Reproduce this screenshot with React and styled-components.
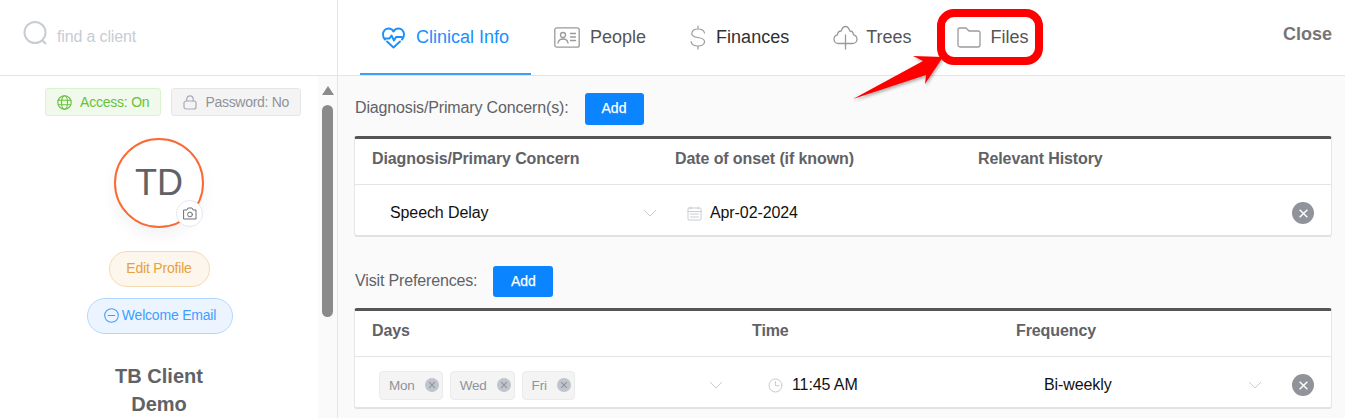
import React from "react";
import styled, { createGlobalStyle } from "styled-components";

const Global = createGlobalStyle`
  html, body { margin: 0; padding: 0; background: #fff; }
  body { font-family: "Liberation Sans", Arial, sans-serif; overflow: hidden; }
`;
const Page = styled.div`
  position: relative; width: 1345px; height: 418px; overflow: hidden;
  display: grid; grid-template-columns: 338px 1fr; background: #fff;
`;
const Side = styled.aside`
  border-right: 1px solid #e6e6e6; display: flex; flex-direction: column; height: 418px; overflow: hidden;
`;
const SearchBar = styled.div`
  height: 76px; flex: none; box-sizing: border-box; border-bottom: 1px solid #e4e4e4; display: flex; align-items: center;
  padding: 0 0 2px 23px; gap: 9px; color: #c8ccd4; font-size: 16px; letter-spacing: -0.15px;
  svg { margin-bottom: 6px; }
`;
const SideBody = styled.div`display: flex; flex: 1; min-height: 0;`;
const Profile = styled.div`
  width: 318px; flex: none; display: flex; flex-direction: column; align-items: center;
  padding-top: 12px; box-sizing: border-box;
`;
const Scroll = styled.div`
  width: 19px; flex: none; background: #fafafa; display: flex; flex-direction: column; align-items: center; padding-top: 10px; box-sizing: border-box;
`;
const ArrowUp = styled.div`
  width: 0; height: 0; border-left: 6px solid transparent; border-right: 6px solid transparent; border-bottom: 9px solid #8a8a8a;
`;
const Thumb = styled.div`width: 11px; height: 212px; margin-top: 10px; flex: none; border-radius: 6px; background: #8a8a8a;`;
const Badges = styled.div`display: flex; gap: 10px; margin-left: 28px;`;
const Badge = styled.div`
  height: 28px; box-sizing: border-box; display: flex; align-items: center; gap: 8px; border-radius: 3px; font-size: 14px; letter-spacing: ${p => p.$on ? -0.22 : -0.3}px;
  padding: 0 11px; border: 1px solid ${p => p.$on ? "#dcf3d2" : "#e6e6e8"};
  background: ${p => p.$on ? "#f0f9eb" : "#f4f4f5"}; color: ${p => p.$on ? "#67c23a" : "#909399"};
`;
const Avatar = styled.div`
  position: relative; width: 90px; height: 90px; box-sizing: border-box; margin-top: 22px; border-radius: 50%;
  border: 2px solid #fb6a33; display: flex; align-items: center; justify-content: center; background: #fff;
  font-size: 36px; color: #606266; box-shadow: 0 8px 16px rgba(0,0,0,.05);
`;
const Camera = styled.div`
  position: absolute; right: -1px; bottom: -1px; width: 27px; height: 27px; box-sizing: border-box; border-radius: 50%; background: #fff; border: 1px solid #e4e7ed;
  display: flex; align-items: center; justify-content: center;
`;
const Pill = styled.div`
  box-sizing: border-box; height: 36px; padding-bottom: 2px; display: flex; align-items: center; justify-content: center; gap: 3px; flex: none;
  font-size: 14px; letter-spacing: -0.2px; border-radius: 18px; width: ${p => p.$w}px; margin-top: ${p => p.$mt}px; margin-left: ${p => p.$ml || 0}px;
  border: 1px solid ${p => p.$c === "blue" ? "#b3d8ff" : "#f5dab1"};
  background: ${p => p.$c === "blue" ? "#ecf5ff" : "#fdf6ec"};
  color: ${p => p.$c === "blue" ? "#409eff" : "#e6a23c"};
`;
const ClientName = styled.div`
  margin-top: 28px; font-size: 20px; line-height: 28px; font-weight: 700; color: #606266; text-align: center; width: 130px; flex: none;
`;
const Main = styled.main`display: flex; flex-direction: column; min-width: 0;`;
const TopBar = styled.header`
  height: 76px; flex: none; box-sizing: border-box; border-bottom: 1px solid #e4e4e4; display: flex; padding-left: 22px; padding-right: 13px; justify-content: space-between;
`;
const Tabs = styled.nav`display: flex;`;
const Tab = styled.div`
  height: 75px; box-sizing: border-box; display: flex; align-items: center; gap: ${p => p.$gap || 10}px; padding: 2px 22px 0; font-size: 18px; margin-left: ${p => p.$ml || 0}px;
  color: ${p => p.$active ? "#1890ff" : p.$dark ? "#303133" : "#555"};
  border-bottom: 2px solid ${p => p.$active ? "#3f9cf7" : "transparent"};
`;
const Close = styled.div`font-size: 18px; font-weight: 700; color: #757575; height: 69px; display: flex; align-items: center;`;
const Content = styled.div`
  flex: 1; background: #fafafa; padding: 17px 13px 0 16px; display: flex; flex-direction: column; min-height: 0;
`;
const LabelRow = styled.div`
  display: flex; align-items: center; font-size: 16px; color: #606266; letter-spacing: -0.15px; margin-top: ${p => p.$mt || 0}px; padding-left: 1px;
  span { margin-bottom: 2px; }
`;
const Add = styled.button`
  height: ${p => p.$h}px; width: ${p => p.$w}px; margin-left: ${p => p.$ml}px; border: 0; border-radius: 3px; background: #0a84ff; color: #fff;
  font: 400 14px "Liberation Sans", Arial, sans-serif; -webkit-text-stroke: 0.25px #fff; padding: 0 0 2px;
`;
const Table = styled.section`
  margin-top: ${p => p.$mt}px; background: #fff; border: 1px solid #e6e6e6; border-top: 3px solid #555; border-bottom: 2px solid #e2e2e2; border-radius: 3px; flex: none;
`;
const HeadRow = styled.div`
  height: 45px; box-sizing: content-box; display: grid; grid-template-columns: ${p => p.$cols}; align-items: center; border-bottom: 1px solid #e4e4e4;
  font-size: 16px; font-weight: 700; color: #606266; padding-left: 17px; letter-spacing: -0.1px;
  span { margin-bottom: 6px; }
`;
const BodyRow = styled.div`
  height: 50px; box-sizing: border-box; padding-top: 6px; display: grid; grid-template-columns: ${p => p.$cols}; align-items: center; font-size: 16px; color: #111; padding-left: 17px; position: relative; letter-spacing: -0.1px;
`;
const Cell = styled.div`display: flex; align-items: center; padding-left: ${p => p.$pl || 0}px; padding-right: ${p => p.$pr || 0}px; gap: ${p => p.$gap || 0}px; justify-content: ${p => p.$between ? "space-between" : "flex-start"};`;
const Remove = styled.div`
  position: absolute; right: 17px; top: 17px; width: 22px; height: 22px; border-radius: 50%; background: #909399; display: flex; align-items: center; justify-content: center;
`;
const Tags = styled.div`display: flex; gap: 7px;`;
const Tag = styled.div`
  height: 29px; box-sizing: border-box; display: flex; align-items: center; gap: 10px; padding: 0 3px 0 9px; background: #f4f4f5; border: 1px solid #ebebed; border-radius: 4px; color: #909399; font-size: 13.5px; letter-spacing: -0.2px;
`;
const TagX = styled.span`width: 14px; height: 14px; border-radius: 50%; background: #c0c4cc; display: flex; align-items: center; justify-content: center;`;
const Overlay = styled.svg`position: absolute; left: 0; top: 0; pointer-events: none;`;

const Cross = ({ s = 10, c = "#fff", w = 1.3 }) => (
  <svg width={s} height={s} viewBox="0 0 10 10"><path d="M1.5 1.5l7 7M8.5 1.5l-7 7" stroke={c} strokeWidth={w} fill="none" /></svg>
);
const Chevron = () => (
  <svg width="14" height="8" viewBox="0 0 14 8"><path d="M1 1l6 6 6-6" stroke="#c8ccd4" strokeWidth="1" fill="none" /></svg>
);
const stroke = { fill: "none", strokeLinecap: "round", strokeLinejoin: "round" };

export default function App() {
  const cols1 = "303px 303px 1fr";
  const cols2 = "380px 264px 1fr";
  return (
    <Page>
      <Global />
      <Side>
        <SearchBar>
          <svg width="25" height="25" viewBox="0 0 25 25" {...stroke} stroke="#c8ccd4" strokeWidth="2"><circle cx="12" cy="11.5" r="10.5" /><path d="M19.5 19.5l3 3" /></svg>
          <span>find a client</span>
        </SearchBar>
        <SideBody>
          <Profile>
            <Badges>
              <Badge $on>
                <svg width="15" height="15" viewBox="0 0 15 15" {...stroke} stroke="#67c23a" strokeWidth="1.1"><circle cx="7.5" cy="7.5" r="6.7" /><ellipse cx="7.5" cy="7.5" rx="3" ry="6.7" /><path d="M1.2 5.2h12.6M1.2 9.8h12.6" /></svg>
                Access: On
              </Badge>
              <Badge>
                <svg width="14" height="15" viewBox="0 0 14 15" {...stroke} stroke="#a8abb2" strokeWidth="1.2"><rect x="1" y="6" width="12" height="8" rx="2" /><path d="M3.8 6V4a3.2 3.2 0 0 1 6.4 0v2" /></svg>
                Password: No
              </Badge>
            </Badges>
            <Avatar>
              TD
              <Camera>
                <svg width="14" height="13" viewBox="0 0 14 13" {...stroke} stroke="#6b6f76" strokeWidth="1"><path d="M1 3h3l1-2h4l1 2h3v9H1z" /><circle cx="7" cy="7.5" r="2.4" /></svg>
              </Camera>
            </Avatar>
            <Pill $w={101} $mt={23}>Edit Profile</Pill>
            <Pill $c="blue" $w={146} $mt={11} $ml={2}>
              <svg width="15" height="15" viewBox="0 0 15 15" {...stroke} stroke="#409eff" strokeWidth="1.1"><circle cx="7.5" cy="7.5" r="6.8" /><path d="M4.2 7.5h6.6" /></svg>
              Welcome Email
            </Pill>
            <ClientName>TB Client Demo</ClientName>
          </Profile>
          <Scroll><ArrowUp /><Thumb /></Scroll>
        </SideBody>
      </Side>
      <Main>
        <TopBar>
          <Tabs>
            <Tab $active>
              <svg width="24" height="22" viewBox="0 0 24 22" {...stroke} stroke="#1890ff" strokeWidth="1.9"><path d="M3 12.500C1.500 11 1 9.500 1 7.500 1 4 3.500 1.500 6.500 1.500c2 0 4 1 5 3 1-2 3-3 5-3 3 0 5.500 2.500 5.500 6 0 2-.5 3.500-2 5" /><path d="M3 11.500h4.500l2-3 2.500 5 2-3.500h6" /><path d="M5 14.500l6.500 6 6.500-6" /></svg>
              Clinical Info
            </Tab>
            <Tab $ml={1}>
              <svg width="26" height="21" viewBox="0 0 26 21" {...stroke} stroke="#9a9a9a" strokeWidth="1.3"><rect x=".8" y=".8" width="24.400" height="19.400" rx="2" /><circle cx="9" cy="8" r="2.500" /><path d="M4 16c.5-3 2.500-4 5-4s4.500 1 5 4M16.500 6.500h5M16.500 10h5M16.500 13.500h5" /></svg>
              People
            </Tab>
            <Tab $dark>
              <svg width="16" height="25" viewBox="0 0 16 25" {...stroke} stroke="#9a9a9a" strokeWidth="1.2"><path d="M8 1v3M8 21v3M14.500 8C14 5.500 11.500 4 8 4 4 4 1.800 6 1.800 8.500S4 12 8 12.500s6.500 2 6.500 4.300S12 21 8 21s-6.500-1.800-7-4.500" /></svg>
              Finances
            </Tab>
            <Tab $gap={8}>
              <svg width="25" height="25" viewBox="0 0 25 25" {...stroke} stroke="#9a9a9a" strokeWidth="1.300"><path d="M5.500 18.500C3 18.500 1 16.600 1 14.200c0-2.200 1.500-4 3.500-4.400C4.700 7.600 6.400 6 8.200 6 9 3.400 10.500 1.500 12.500 1.500s3.500 1.900 4.300 4.500c1.800 0 3.500 1.600 3.700 3.800 2 .4 3.500 2.200 3.500 4.400 0 2.400-2 4.300-4.500 4.300z" /><path d="M12.500 24V10" /></svg>
              Trees
            </Tab>
            <Tab $ml={1}>
              <svg width="24" height="21" viewBox="0 0 24 21" {...stroke} stroke="#9a9a9a" strokeWidth="1.300"><path d="M1 3a2 2 0 0 1 2-2h6l3 3h9a2 2 0 0 1 2 2v12a2 2 0 0 1-2 2H3a2 2 0 0 1-2-2z" /></svg>
              Files
            </Tab>
          </Tabs>
          <Close>Close</Close>
        </TopBar>
        <Content>
          <LabelRow><span>Diagnosis/Primary Concern(s):</span><Add $w={59} $h={32} $ml={16}>Add</Add></LabelRow>
          <Table $mt={11}>
            <HeadRow $cols={cols1}><span>Diagnosis/Primary Concern</span><span>Date of onset (if known)</span><span>Relevant History</span></HeadRow>
            <BodyRow $cols={cols1}>
              <Cell $pl={18} $pr={18} $between><span>Speech Delay</span><Chevron /></Cell>
              <Cell $pl={12} $gap={8}>
                <svg width="15" height="15" viewBox="0 0 15 15" {...stroke} stroke="#c8ccd4" strokeWidth="1"><rect x="1" y="2" width="13" height="12" rx="1" /><path d="M1 5.500h13M4 1v2M11 1v2M3.500 8h8M3.500 11h8" /></svg>
                Apr-02-2024
              </Cell>
              <Remove><Cross s={11} /></Remove>
            </BodyRow>
          </Table>
          <LabelRow $mt={29}><span>Visit Preferences:</span><Add $w={60} $h={31} $ml={16}>Add</Add></LabelRow>
          <Table $mt={11}>
            <HeadRow $cols={cols2}><span>Days</span><span>Time</span><span>Frequency</span></HeadRow>
            <BodyRow $cols={cols2}>
              <Cell $pl={7} $pr={29} $between>
                <Tags>
                  <Tag>Mon<TagX><Cross s={8} c="#909399" /></TagX></Tag>
                  <Tag>Wed<TagX><Cross s={8} c="#909399" /></TagX></Tag>
                  <Tag>Fri<TagX><Cross s={8} c="#909399" /></TagX></Tag>
                </Tags>
                <Chevron />
              </Cell>
              <Cell $pl={16} $gap={9}>
                <svg width="15" height="15" viewBox="0 0 15 15" {...stroke} stroke="#c8ccd4" strokeWidth="1"><circle cx="7.500" cy="7.500" r="6.500" /><path d="M7.500 3.500v4.200h3.500" /></svg>
                11:45 AM
              </Cell>
              <Cell $pl={28} $pr={69} $between><span>Bi-weekly</span><Chevron /></Cell>
              <Remove><Cross s={11} /></Remove>
            </BodyRow>
          </Table>
        </Content>
      </Main>
      <Overlay width="1345" height="418" viewBox="0 0 1345 418">
        <defs><filter id="sh" x="-20%" y="-20%" width="140%" height="140%"><feDropShadow dx="1" dy="2" stdDeviation="1.500" floodColor="#000" floodOpacity=".3" /></filter></defs>
        <path d="M853 99 L923 61 L913 56 L943 57 L925 84 L926 75 Z" fill="#f00" filter="url(#sh)" />
        <rect x="941" y="13" width="98" height="48" rx="13" fill="none" stroke="#f00" strokeWidth="8" />
      </Overlay>
    </Page>
  );
}
